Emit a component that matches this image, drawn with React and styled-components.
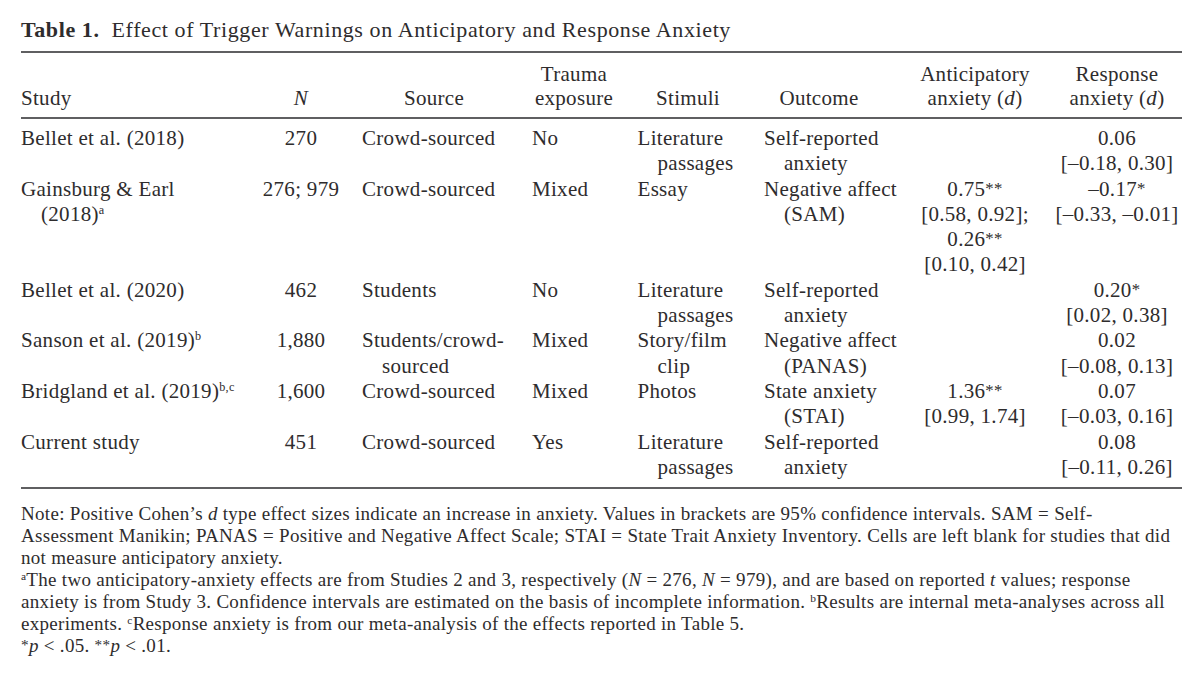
import styled, { createGlobalStyle } from "styled-components";

const SERIF = `"Liberation Serif", "Times New Roman", serif`;
const INK = "#2e2c2d";
const RULE = "#5f5f61";

const GlobalStyle = createGlobalStyle`
  body {
    margin: 0;
    background: #ffffff;
  }
`;

// column tracks and the inner padding that lines up the text with the print
const COLS = [
  { key: "study", w: 229, align: "left", pl: 0, pr: 0, head: "left" },
  { key: "n", w: 102, align: "center", pl: 0, pr: 0, head: "center" },
  { key: "source", w: 170, align: "left", pl: 10, pr: 16, head: "center" },
  { key: "trauma", w: 106, align: "left", pl: 10, pr: 12, head: "center" },
  { key: "stimuli", w: 127, align: "left", pl: 9.5, pr: 16.5, head: "center" },
  { key: "outcome", w: 150, align: "left", pl: 9, pr: 31, head: "center" },
  { key: "antic", w: 140, align: "center", pl: 0, pr: 0, head: "center" },
  { key: "resp", w: 137, align: "center", pl: 7, pr: 0, head: "center" },
];

const gridTracks = COLS.map((c) => `${c.w}px`).join(" ");

const Page = styled.div`
  width: 1200px;
  height: 675px;
  box-sizing: border-box;
  padding: 17px 18px 0 21px;
  font-family: ${SERIF};
  color: ${INK};
  overflow: hidden;
`;

const Caption = styled.div`
  font-size: 22px;
  line-height: 26px;
  letter-spacing: 0.6px;
  white-space: nowrap;
`;

const CaptionLabel = styled.b`
  margin-right: 12px;
`;

const Table = styled.div`
  margin-top: 8px;
  width: 1161px;
  border-top: 2px solid ${RULE};
  border-bottom: 2px solid ${RULE};
  font-size: 21px;
  letter-spacing: 0.3px;
`;

const HeadGrid = styled.div`
  display: grid;
  grid-template-columns: ${gridTracks};
  padding: 9px 0 7px;
  border-bottom: 2px solid ${RULE};
  line-height: 24px;
`;

const BodyGrid = styled.div`
  display: grid;
  grid-template-columns: ${gridTracks};
  padding: 7px 0 6.5px;
  line-height: 25.3px;
`;

const Cell = styled.div`
  text-align: ${(p) => p.$align};
  padding-left: ${(p) => p.$pl}px;
  padding-right: ${(p) => p.$pr}px;
  min-width: 0;
`;

const HeadCell = styled(Cell)`
  align-self: end;
`;

const Line = styled.div`
  white-space: nowrap;
  padding-left: ${(p) => (p.$indent ? "20px" : "0")};
`;

const Sup = styled.sup`
  font-size: 0.58em;
  line-height: 0;
  vertical-align: 0.6em;
`;

const Star = styled.span`
  font-size: 0.8em;
  line-height: 0;
  vertical-align: 0.12em;
`;

const Notes = styled.div`
  margin-top: 14px;
  font-size: 19px;
  line-height: 22px;
  letter-spacing: 0.3px;
`;

const NoteLine = styled.div`
  white-space: nowrap;
`;

const NoteSup = styled.sup`
  font-size: 0.6em;
  line-height: 0;
  vertical-align: 0.55em;
`;

const HEADERS = {
  study: ["Study"],
  n: [<i key="n">N</i>],
  source: ["Source"],
  trauma: ["Trauma", "exposure"],
  stimuli: ["Stimuli"],
  outcome: ["Outcome"],
  antic: ["Anticipatory", <>anxiety (<i>d</i>)</>],
  resp: ["Response", <>anxiety (<i>d</i>)</>],
};

const ROWS = [
  {
    study: ["Bellet et al. (2018)"],
    n: ["270"],
    source: ["Crowd-sourced"],
    trauma: ["No"],
    stimuli: ["Literature", "passages"],
    outcome: ["Self-reported", "anxiety"],
    antic: [],
    resp: ["0.06", "[–0.18, 0.30]"],
  },
  {
    study: ["Gainsburg & Earl", <>(2018)<Sup>a</Sup></>],
    n: ["276; 979"],
    source: ["Crowd-sourced"],
    trauma: ["Mixed"],
    stimuli: ["Essay"],
    outcome: ["Negative affect", "(SAM)"],
    antic: [<>0.75<Star>**</Star></>, "[0.58, 0.92];", <>0.26<Star>**</Star></>, "[0.10, 0.42]"],
    resp: [<>–0.17<Star>*</Star></>, "[–0.33, –0.01]"],
  },
  {
    study: ["Bellet et al. (2020)"],
    n: ["462"],
    source: ["Students"],
    trauma: ["No"],
    stimuli: ["Literature", "passages"],
    outcome: ["Self-reported", "anxiety"],
    antic: [],
    resp: [<>0.20<Star>*</Star></>, "[0.02, 0.38]"],
  },
  {
    study: [<>Sanson et al. (2019)<Sup>b</Sup></>],
    n: ["1,880"],
    source: ["Students/crowd-", "sourced"],
    trauma: ["Mixed"],
    stimuli: ["Story/film", "clip"],
    outcome: ["Negative affect", "(PANAS)"],
    antic: [],
    resp: ["0.02", "[–0.08, 0.13]"],
  },
  {
    study: [<>Bridgland et al. (2019)<Sup>b,c</Sup></>],
    n: ["1,600"],
    source: ["Crowd-sourced"],
    trauma: ["Mixed"],
    stimuli: ["Photos"],
    outcome: ["State anxiety", "(STAI)"],
    antic: [<>1.36<Star>**</Star></>, "[0.99, 1.74]"],
    resp: ["0.07", "[–0.03, 0.16]"],
  },
  {
    study: ["Current study"],
    n: ["451"],
    source: ["Crowd-sourced"],
    trauma: ["Yes"],
    stimuli: ["Literature", "passages"],
    outcome: ["Self-reported", "anxiety"],
    antic: [],
    resp: ["0.08", "[–0.11, 0.26]"],
  },
];

const App = () => {
  return (
    <>
      <GlobalStyle />
      <Page>
        <Caption>
          <CaptionLabel>Table 1.</CaptionLabel>
          Effect of Trigger Warnings on Anticipatory and Response Anxiety
        </Caption>

        <Table>
          <HeadGrid>
            {COLS.map((col) => (
              <HeadCell key={col.key} $align={col.head} $pl={col.pl} $pr={col.pr}>
                {HEADERS[col.key].map((line, i) => (
                  <Line key={i}>{line}</Line>
                ))}
              </HeadCell>
            ))}
          </HeadGrid>

          <BodyGrid>
            {ROWS.map((row, r) =>
              COLS.map((col) => (
                <Cell key={r + col.key} $align={col.align} $pl={col.pl} $pr={col.pr}>
                  {row[col.key].map((line, i) => (
                    <Line key={i} $indent={i > 0 && col.align === "left"}>
                      {line}
                    </Line>
                  ))}
                </Cell>
              ))
            )}
          </BodyGrid>
        </Table>

        <Notes>
          <NoteLine>
            Note: Positive Cohen’s <i>d</i> type effect sizes indicate an increase in anxiety. Values in brackets are 95% confidence intervals. SAM = Self-
          </NoteLine>
          <NoteLine>
            Assessment Manikin; PANAS = Positive and Negative Affect Scale; STAI = State Trait Anxiety Inventory. Cells are left blank for studies that did
          </NoteLine>
          <NoteLine>not measure anticipatory anxiety.</NoteLine>
          <NoteLine>
            <NoteSup>a</NoteSup>The two anticipatory-anxiety effects are from Studies 2 and 3, respectively (<i>N</i> = 276, <i>N</i> = 979), and are based on reported <i>t</i> values; response
          </NoteLine>
          <NoteLine>
            anxiety is from Study 3. Confidence intervals are estimated on the basis of incomplete information. <NoteSup>b</NoteSup>Results are internal meta-analyses across all
          </NoteLine>
          <NoteLine>
            experiments. <NoteSup>c</NoteSup>Response anxiety is from our meta-analysis of the effects reported in Table 5.
          </NoteLine>
          <NoteLine>
            <Star>*</Star><i>p</i> &lt; .05. <Star>**</Star><i>p</i> &lt; .01.
          </NoteLine>
        </Notes>
      </Page>
    </>
  );
};

export default App;
